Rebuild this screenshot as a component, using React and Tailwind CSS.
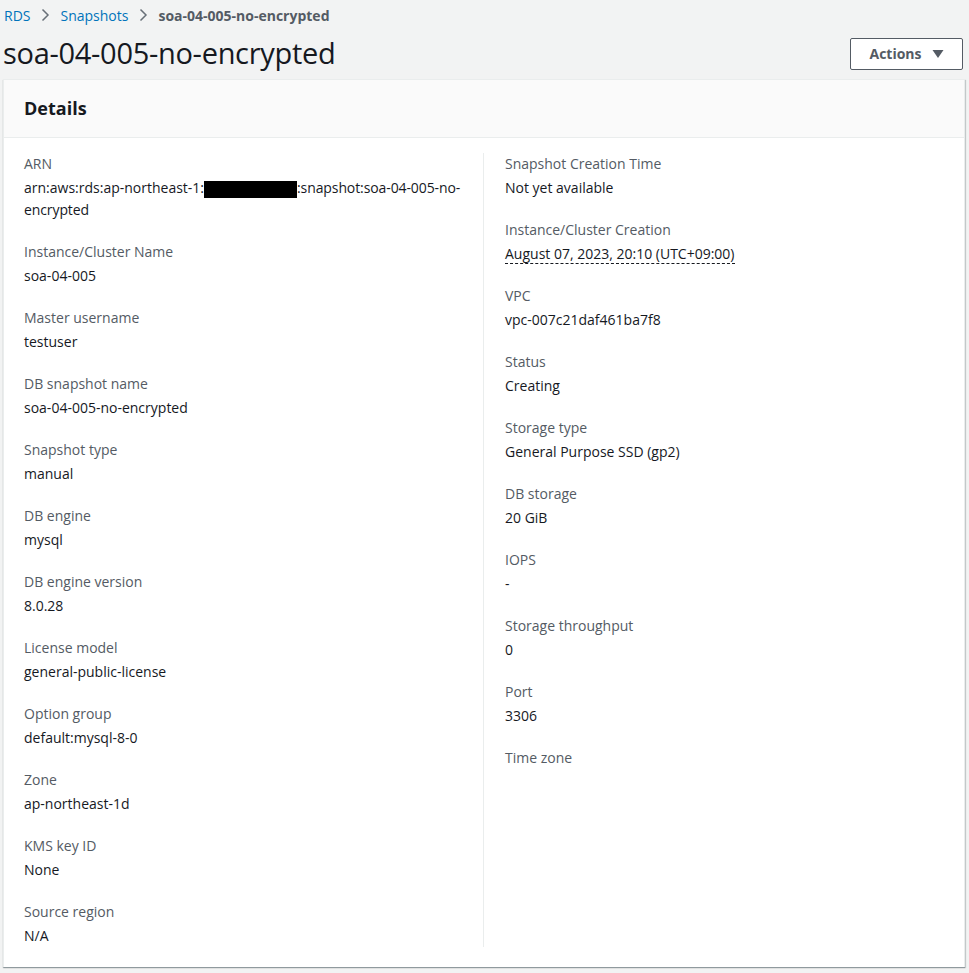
import React from 'react';

const leftItems = [
  { label: 'Instance/Cluster Name', value: 'soa-04-005' },
  { label: 'Master username', value: 'testuser' },
  { label: 'DB snapshot name', value: 'soa-04-005-no-encrypted' },
  { label: 'Snapshot type', value: 'manual' },
  { label: 'DB engine', value: 'mysql' },
  { label: 'DB engine version', value: '8.0.28' },
  { label: 'License model', value: 'general-public-license' },
  { label: 'Option group', value: 'default:mysql-8-0' },
  { label: 'Zone', value: 'ap-northeast-1d' },
  { label: 'KMS key ID', value: 'None' },
  { label: 'Source region', value: 'N/A' },
];

const rightItems = [
  { label: 'VPC', value: 'vpc-007c21daf461ba7f8' },
  { label: 'Status', value: 'Creating' },
  { label: 'Storage type', value: 'General Purpose SSD (gp2)' },
  { label: 'DB storage', value: '20 GiB' },
  { label: 'IOPS', value: '-' },
  { label: 'Storage throughput', value: '0' },
  { label: 'Port', value: '3306' },
  { label: 'Time zone', value: '' },
];

const Field = ({ label, children, last }) => (
  <div className={last ? '' : 'mb-[20px]'}>
    <div className="text-[#545b64] leading-[22px] mb-[2px]">{label}</div>
    <div className="text-[#16191f] leading-[22px] min-h-[22px]">{children}</div>
  </div>
);

const Chevron = () => (
  <svg width="16" height="16" viewBox="0 0 16 16" className="mx-[7px]">
    <path d="M5.5 2.5 L11 8 L5.5 13.5" fill="none" stroke="#687078" strokeWidth="1.5" />
  </svg>
);

export default function App() {
  return (
    <div
      className="min-h-[973px] bg-[#f2f3f3] text-[14px]"
      style={{ fontFamily: '"Open Sans", "Noto Sans", Arial, sans-serif' }}
    >
      {/* Breadcrumb */}
      <div className="flex items-center pl-[4px] pt-[4px] h-[26px]">
        <span className="text-[#0073bb]">RDS</span>
        <Chevron />
        <span className="text-[#0073bb]">Snapshots</span>
        <Chevron />
        <span className="text-[#545b64] font-bold">soa-04-005-no-encrypted</span>
      </div>

      {/* Title row */}
      <div className="flex items-center justify-between pl-[3px] pr-[6px] h-[53px]">
        <h1 className="text-[29px] text-[#16191f] leading-[34px] tracking-[-0.3px]">soa-04-005-no-encrypted</h1>
        <button className="flex items-center gap-[10px] h-[32px] w-[113px] justify-center mt-[2px] border border-[#545b64] rounded-[2px] bg-white text-[#545b64] font-bold">
          Actions
          <svg width="12" height="10" viewBox="0 0 12 10">
            <path d="M0.5 1 L11.5 1 L6 9 Z" fill="#545b64" />
          </svg>
        </button>
      </div>

      {/* Details card */}
      <div className="mx-[3px] w-[962px] bg-white border-t border-l border-r border-[#eaeded] shadow-[0_1px_1px_0_rgba(0,28,36,0.3),1px_1px_1px_0_rgba(0,28,36,0.15)]">
        <div className="h-[58px] bg-[#fafafa] border-b border-[#eaeded] flex items-center px-[20px]">
          <h2 className="text-[18px] font-bold text-[#16191f]">Details</h2>
        </div>
        <div className="px-[20px] pt-[15px] pb-[20px] grid grid-cols-2">
          <div className="pr-[20px] border-r border-[#eaeded]">
            <Field label="ARN">
              arn:aws:rds:ap-northeast-1:
              <span className="inline-block align-middle w-[93px] h-[17px] bg-black" />
              <span className="tracking-[-0.1px]">:snapshot:soa-04-005-no-encrypted</span>
            </Field>
            {leftItems.map((it, i) => (
              <Field key={it.label} label={it.label} last={i === leftItems.length - 1}>{it.value}</Field>
            ))}
          </div>
          <div className="pl-[21px]">
            <Field label="Snapshot Creation Time">Not yet available</Field>
            <Field label="Instance/Cluster Creation">
              <span className="border-b border-dashed border-[#16191f]">August 07, 2023, 20:10 (UTC+09:00)</span>
            </Field>
            {rightItems.map((it) => (
              <Field key={it.label} label={it.label}>{it.value}</Field>
            ))}
          </div>
        </div>
      </div>
    </div>
  );
}
